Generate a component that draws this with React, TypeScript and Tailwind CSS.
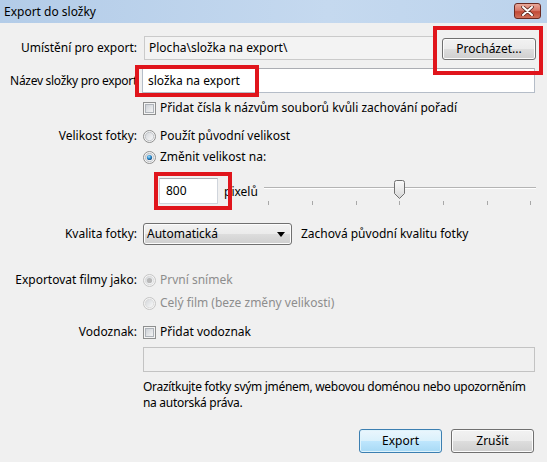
import React from "react";

const Checkbox = () => (
  <svg width="13" height="13" viewBox="0 0 13 13" className="shrink-0">
    <defs>
      <linearGradient id="cbg" x1="0" y1="0" x2="1" y2="1">
        <stop offset="0" stopColor="#cbcfd5" />
        <stop offset="1" stopColor="#f6f6f6" />
      </linearGradient>
    </defs>
    <rect x="0.5" y="0.5" width="12" height="12" fill="#f4f4f4" stroke="#8e8f8f" />
    <rect x="2.5" y="2.5" width="8" height="8" fill="url(#cbg)" stroke="#aeb3b9" />
  </svg>
);

const Radio = ({ checked, disabled }: { checked?: boolean; disabled?: boolean }) => (
  <svg width="13" height="13" viewBox="0 0 13 13" className="shrink-0">
    <defs>
      <linearGradient id="rbg" x1="0" y1="0" x2="1" y2="1">
        <stop offset="0" stopColor="#d2d5d9" />
        <stop offset="1" stopColor="#fbfbfb" />
      </linearGradient>
      <radialGradient id="rdot" cx="0.4" cy="0.35" r="0.7">
        <stop offset="0" stopColor="#aee3fb" />
        <stop offset="0.5" stopColor="#2f8fd0" />
        <stop offset="1" stopColor="#17497a" />
      </radialGradient>
    </defs>
    <circle cx="6.5" cy="6.5" r="6" fill="#f4f4f4" stroke={disabled ? "#c4c4c4" : "#8e8f8f"} />
    <circle cx="6.5" cy="6.5" r="4.2" fill="url(#rbg)" stroke={disabled ? "#d8d8d8" : "#b9bdc2"} strokeWidth="0.8" />
    {checked && (
      <circle cx="6.5" cy="6.5" r="2.6" fill={disabled ? "#b8b8b8" : "url(#rdot)"} />
    )}
  </svg>
);

const Label = ({ children }: { children: React.ReactNode }) => (
  <div className="w-[143px] shrink-0 pr-[6px] text-right whitespace-nowrap">{children}</div>
);

const btn =
  "rounded-[3px] border border-[#707070] bg-[linear-gradient(#f2f2f2_0%,#ebebeb_50%,#dddddd_51%,#cfcfcf_100%)] flex items-center justify-center shadow-[inset_0_0_0_1px_#fcfcfc]";

export default function App() {
  return (
    <div
      className="relative w-[547px] h-[462px] overflow-hidden bg-[#f0f0f0] text-[12px] leading-[16px] text-black"
      style={{ fontFamily: '"Noto Sans", "Open Sans", sans-serif' }}
    >
      {/* title bar */}
      <div className="h-[23px] flex items-center bg-[linear-gradient(90deg,#b3cce8,#c5d9ef_60%,#bcd3ec)]">
        <div className="pl-[4px] text-[12px] text-black">Export do složky</div>
        <div className="ml-auto mr-[6px] mt-[-2px] w-[27px] h-[16px] rounded-[3px] border border-[#6b2a22] bg-[linear-gradient(#e9a99a_0%,#d8796a_45%,#c24a36_55%,#d0705a_100%)] flex items-center justify-center">
          <svg width="13" height="10" viewBox="0 0 13 10">
            <path d="M2 1 L11 9 M11 1 L2 9" stroke="#5a2a22" strokeWidth="3.6" strokeLinecap="round" />
            <path d="M2 1 L11 9 M11 1 L2 9" stroke="#ffffff" strokeWidth="2" strokeLinecap="round" />
          </svg>
        </div>
      </div>

      {/* body */}
      <div className="flex flex-col">
        {/* row 1 */}
        <div className="mt-[13px] flex items-center h-[24px] pr-[11px]">
          <Label>Umístění pro export:</Label>
          <div className="ml-[1px] w-[293px] h-[24px] border border-[#cacaca] bg-[#f3f3f3] flex items-center pl-[4px] whitespace-nowrap">
            Plocha\složka na export\
          </div>
          <div className={`ml-auto w-[94px] h-[22px] mt-[2px] ${btn}`}>Procházet...</div>
        </div>

        {/* row 2 */}
        <div className="mt-[8px] flex items-center h-[25px] pr-[12px]">
          <div className="w-[143px] shrink-0 pr-[6px] text-right whitespace-nowrap tracking-[-0.3px]">
            Název složky pro export
          </div>
          <div className="ml-[-1px] flex-1 h-[25px] border border-[#b5bdc8] border-t-[#abadb3] bg-white flex items-center pl-[5px]">
            složka na export
          </div>
        </div>

        {/* checkbox row */}
        <div className="mt-[7px] flex items-center h-[16px]">
          <div className="w-[143px] shrink-0" />
          <Checkbox />
          <span className="ml-[4px] whitespace-nowrap">Přidat čísla k názvům souborů kvůli zachování pořadí</span>
        </div>

        {/* velikost */}
        <div className="mt-[12px] flex items-center h-[16px]">
          <Label>Velikost fotky:</Label>
          <Radio />
          <span className="ml-[4px]">Použít původní velikost</span>
        </div>
        <div className="mt-[5px] flex items-center h-[16px]">
          <div className="w-[143px] shrink-0" />
          <Radio checked />
          <span className="ml-[4px]">Změnit velikost na:</span>
        </div>

        {/* size row */}
        <div className="mt-[13px] flex items-center h-[26px] pr-[9px]">
          <div className="w-[159px] shrink-0" />
          <div className="w-[59px] h-[26px] border border-[#d0d5dc] border-t-[#abadb3] bg-white flex items-center pl-[6px]">
            800
          </div>
          <span className="ml-[6px] mt-[2px]">pixelů</span>
          <svg width="276" height="30" viewBox="0 0 276 30" className="ml-auto mt-[4px]">
            <line x1="2" y1="9.5" x2="274" y2="9.5" stroke="#b4b4b4" />
            <line x1="2" y1="10.5" x2="274" y2="10.5" stroke="#ffffff" />
            {[6, 50, 94, 137, 181, 225, 268].map((x) => (
              <line key={x} x1={x + 0.5} y1="23" x2={x + 0.5} y2="27" stroke="#a8a8a8" />
            ))}
            <defs>
              <linearGradient id="thumb" x1="0" y1="0" x2="0" y2="1">
                <stop offset="0" stopColor="#fafafa" />
                <stop offset="0.5" stopColor="#eaeaea" />
                <stop offset="1" stopColor="#d4d4d4" />
              </linearGradient>
            </defs>
            <path
              d="M132.5 4.5 Q132.5 2.5 134.5 2.5 L140.5 2.5 Q142.5 2.5 142.5 4.5 L142.5 15.5 L137.5 20.5 L132.5 15.5 Z"
              fill="url(#thumb)"
              stroke="#707070"
            />
          </svg>
        </div>

        {/* kvalita */}
        <div className="mt-[19px] flex items-center h-[22px]">
          <Label>Kvalita fotky:</Label>
          <div className="w-[149px] h-[22px] rounded-[3px] border border-[#707070] bg-[linear-gradient(#f2f2f2_0%,#ebebeb_50%,#dddddd_51%,#cfcfcf_100%)] shadow-[inset_0_0_0_1px_#fcfcfc] flex items-center pl-[3px] pr-[6px]">
            <span>Automatická</span>
            <svg width="8" height="5" viewBox="0 0 8 5" className="ml-auto">
              <path d="M0 0 L8 0 L4 5 Z" fill="#000" />
            </svg>
          </div>
          <span className="ml-[9px]">Zachová původní kvalitu fotky</span>
        </div>

        {/* filmy */}
        <div className="mt-[27px] flex items-center h-[16px]">
          <Label>Exportovat filmy jako:</Label>
          <Radio checked disabled />
          <span className="ml-[4px] text-[#8d8d8d]">První snímek</span>
        </div>
        <div className="mt-[7px] flex items-center h-[16px]">
          <div className="w-[143px] shrink-0" />
          <Radio disabled />
          <span className="ml-[4px] text-[#8d8d8d]">Celý film (beze změny velikosti)</span>
        </div>

        {/* vodoznak */}
        <div className="mt-[13px] flex items-center h-[16px]">
          <Label>Vodoznak:</Label>
          <Checkbox />
          <span className="ml-[4px]">Přidat vodoznak</span>
        </div>
        <div className="mt-[7px] flex h-[25px] pr-[12px]">
          <div className="w-[143px] shrink-0" />
          <div className="flex-1 h-[25px] border border-[#c3c3c3] bg-[#f0f0f0]" />
        </div>
        <div className="mt-[7px] flex">
          <div className="w-[143px] shrink-0" />
          <div className="flex flex-col whitespace-nowrap tracking-[-0.3px]">
            <div className="h-[16px] leading-[16px]">Orazítkujte fotky svým jménem, webovou doménou nebo upozorněním</div>
            <div className="h-[16px] leading-[16px]">na autorská práva.</div>
          </div>
        </div>

        {/* buttons */}
        <div className="mt-[18px] flex justify-end gap-[9px] pr-[13px]">
          <div className="w-[83px] h-[24px] rounded-[3px] border border-[#3c7fb1] bg-[linear-gradient(#eaf6fd_0%,#d9f0fc_50%,#bee6fd_51%,#a7d9f5_100%)] shadow-[inset_0_0_0_1px_#dff3fc] flex items-center justify-center">
            Export
          </div>
          <div className={`w-[83px] h-[24px] ${btn}`}>Zrušit</div>
        </div>
      </div>

      {/* red annotation boxes */}
      <div className="absolute left-[433px] top-[26px] w-[110px] h-[49px] border-[4px] border-[#e0151c]" />
      <div className="absolute left-[135px] top-[65px] w-[124px] h-[32px] border-[4px] border-[#e0151c]" />
      <div className="absolute left-[154px] top-[172px] w-[78px] h-[38px] border-[4px] border-[#e0151c]" />
    </div>
  );
}
